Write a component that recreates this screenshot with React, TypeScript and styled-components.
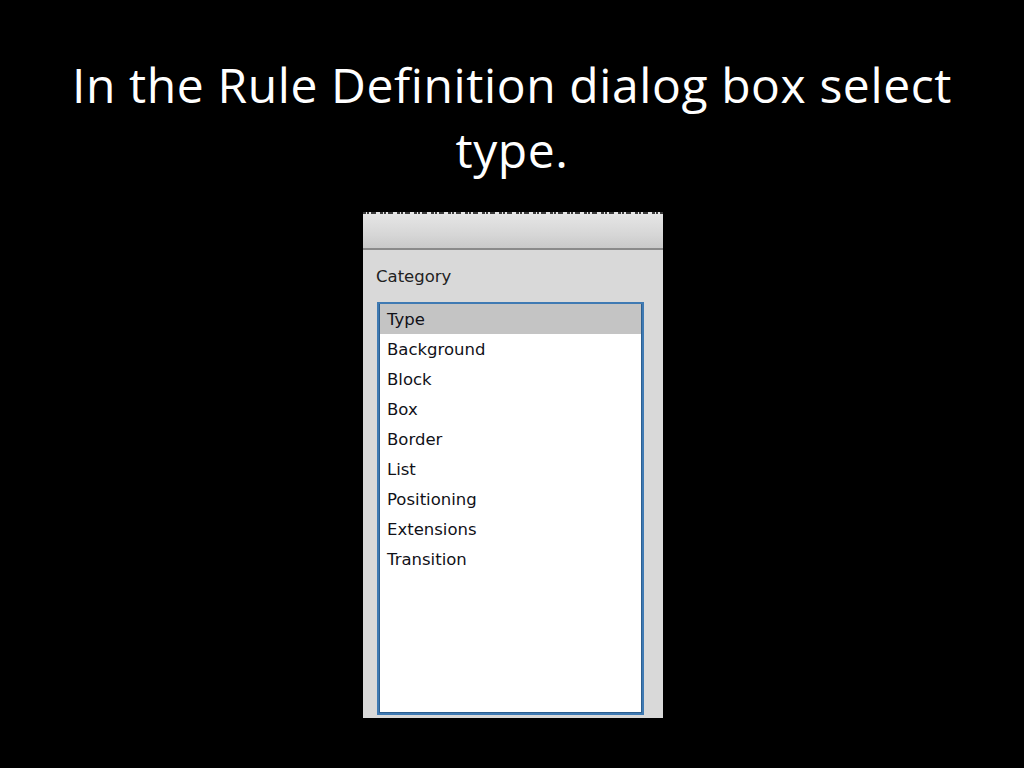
import styled, { createGlobalStyle } from "styled-components";

const GlobalStyle = createGlobalStyle`
  html, body {
    margin: 0;
    padding: 0;
    background: #000;
  }
`;

const Slide = styled.div`
  width: 1024px;
  height: 768px;
  background: #000;
  display: flex;
  flex-direction: column;
  align-items: center;
  overflow: hidden;
`;

const Title = styled.h1`
  margin: 52px 0 0;
  width: 980px;
  text-align: center;
  font-family: "Open Sans", Lato, sans-serif;
  font-weight: 400;
  font-size: 48px;
  line-height: 65px;
  letter-spacing: 0.6px;
  color: #fff;
`;

const Shot = styled.div`
  margin: 30px 0 0 2px;
  width: 300px;
  display: flex;
  flex-direction: column;
`;

/* bottoms of the cropped line of text above the toolbar */
const CutStrip = styled.div`
  height: 4px;
  background:
    repeating-linear-gradient(
      90deg,
      #3a3a3a 0 3px,
      #e6e6e6 3px 4px,
      #3a3a3a 4px 6px,
      #e6e6e6 6px 8px,
      #3a3a3a 8px 13px,
      #e6e6e6 13px 17px
    ) top / 100% 2px no-repeat,
    #e6e6e6;
`;

const Toolbar = styled.div`
  height: 32px;
  background: linear-gradient(#e4e4e4, #d6d6d6 60%, #c9c9c9);
  border-bottom: 2px solid #8a8a8a;
`;

const Panel = styled.div`
  height: 468px;
  background: #d9d9d9;
  padding: 18px 19px 3px 13px;
  box-sizing: border-box;
  display: flex;
  flex-direction: column;
`;

const Label = styled.div`
  font-family: "DejaVu Sans", sans-serif;
  font-size: 16.5px;
  line-height: 18px;
  color: #222;
`;

const ListBox = styled.div`
  margin: 16px 0 0 1px;
  flex: 1;
  background: #fff;
  border: 2px solid #3f7ab3;
  box-shadow: inset 0 0 0 1px #2d5f8f;
  display: flex;
  flex-direction: column;
`;

const Row = styled.div<{ $selected?: boolean }>`
  height: 30px;
  display: flex;
  align-items: center;
  padding-left: 7px;
  font-family: "DejaVu Sans", sans-serif;
  font-size: 16.5px;
  color: #111118;
  background: ${(p) => (p.$selected ? "#c4c4c4" : "transparent")};
  margin: 0 1px;
`;

const categories = [
  "Type",
  "Background",
  "Block",
  "Box",
  "Border",
  "List",
  "Positioning",
  "Extensions",
  "Transition",
];

export default function App() {
  return (
    <Slide>
      <GlobalStyle />
      <Title>
        In the Rule Definition dialog box select
        <br />
        type.
      </Title>
      <Shot>
        <CutStrip />
        <Toolbar />
        <Panel>
          <Label>Category</Label>
          <ListBox>
            {categories.map((c, i) => (
              <Row key={c} $selected={i === 0}>
                {c}
              </Row>
            ))}
          </ListBox>
        </Panel>
      </Shot>
    </Slide>
  );
}
